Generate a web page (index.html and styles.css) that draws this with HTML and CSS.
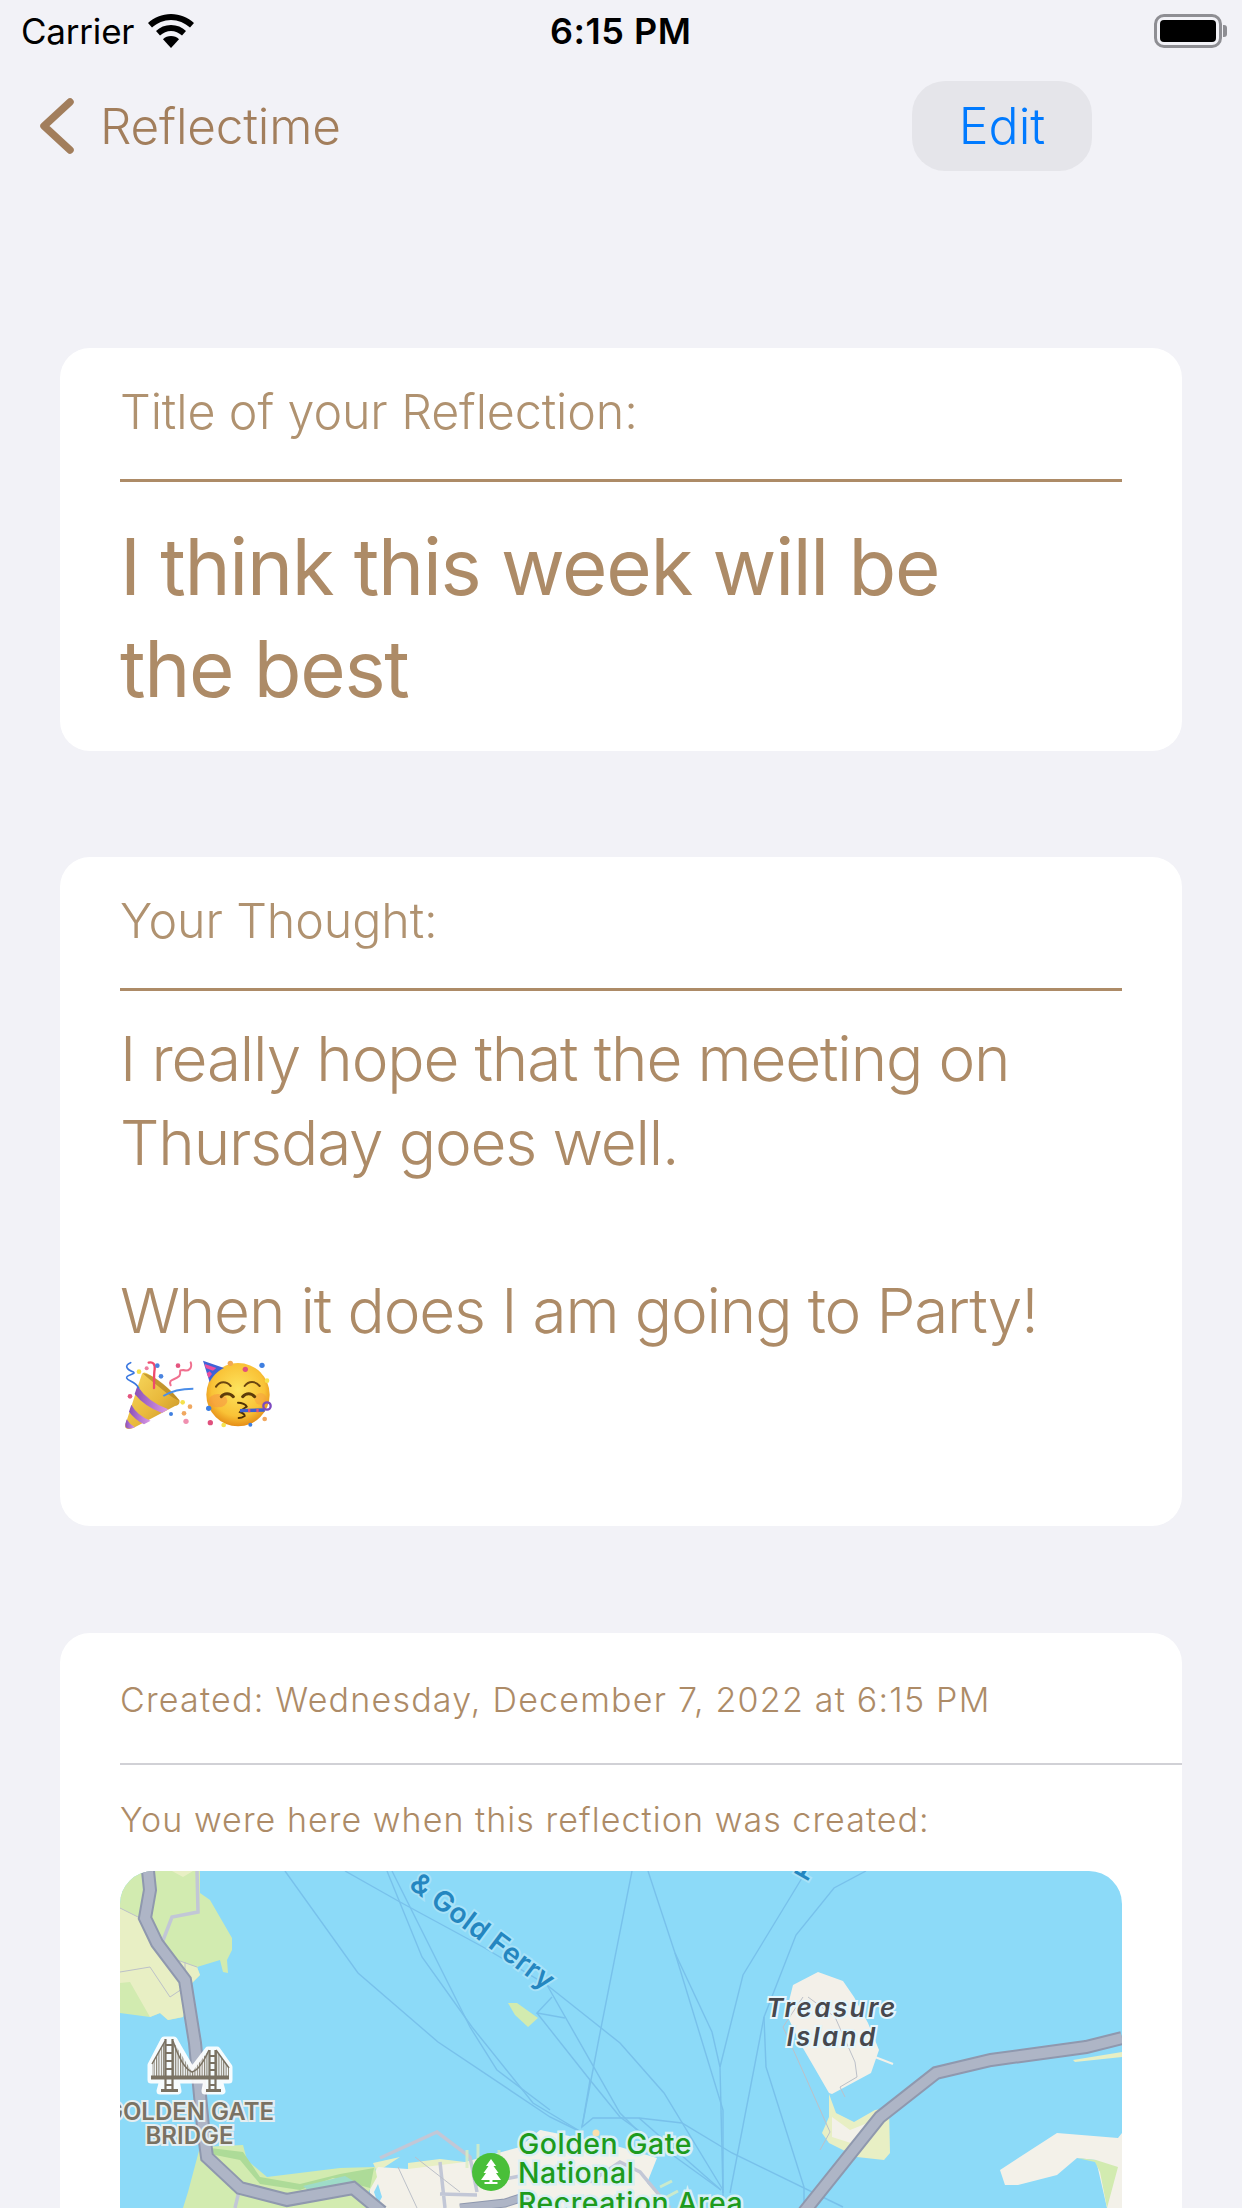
FILE: index.html
```html
<!DOCTYPE html>
<html lang="en">
<head>
<meta charset="utf-8">
<title>Reflectime</title>
<link rel="stylesheet" href="styles.css">
</head>
<body>
<div class="screen">
  <header class="status">
    <div class="status-left">
      <span class="carrier">Carrier</span>
      <svg class="wifi" viewBox="0 0 46 34"><path d="M23 0C14 0 6 3.500 0 9l4 4.500C9 9 16 6 23 6s14 3 19 7.500L46 9C40 3.500 32 0 23 0z"/><path d="M23 11c-6 0-11 2-15 6l4 4.500c3-2.700 7-4.500 11-4.500s8 1.800 11 4.500l4-4.500c-4-4-9-6-15-6z"/><path d="M23 22c-3 0-6 1-8 3.200L23 34l8-8.800C29 23 26 22 23 22z"/></svg>
    </div>
    <span class="time">6:15 PM</span>
    <div class="battery"><span class="battery-fill"></span></div>
  </header>
  <nav class="nav">
    <a class="back">
      <svg class="chevron" viewBox="0 0 36 56"><path d="M31 4L5 28l26 24" /></svg>
      <span>Reflectime</span>
    </a>
    <button class="edit">Edit</button>
  </nav>
  <main class="cards">
    <section class="card card-title">
      <div class="label">Title of your Reflection:</div>
      <h1 class="title">I think this week will be<br>the best</h1>
    </section>
    <section class="card card-thought">
      <div class="label">Your Thought:</div>
      <p class="thought">I really hope that the meeting on<br>Thursday goes well.<br><br>When it does I am going to Party!</p>
      <div class="emojis">
        <svg class="emoji" viewBox="72 88 210 210">
          <defs>
            <linearGradient id="cone" x1="0" y1="0" x2="1" y2="1"><stop offset="0" stop-color="#f9dc62"/><stop offset=".55" stop-color="#e9b93c"/><stop offset="1" stop-color="#c08c26"/></linearGradient>
            <linearGradient id="band" x1="0" y1="0" x2="1" y2="0"><stop offset="0" stop-color="#8a4fb8"/><stop offset="1" stop-color="#dc9be8"/></linearGradient>
          </defs>
          <path d="M75 285L125 132Q130 118 150 133Q205 168 238 208Q242 222 225 226L100 292Q76 300 75 285Z" fill="url(#cone)"/>
          <path d="M112 166Q145 215 205 236L186 247Q132 226 104 190Z" fill="url(#band)"/>
          <path d="M94 222Q112 255 152 270L132 281Q104 266 87 243Z" fill="url(#band)"/>
          <path d="M80 266Q88 280 105 290Q85 298 77 290Q74 280 80 266Z" fill="url(#band)"/>
          <path d="M128 128Q150 128 190 160Q225 190 238 210Q220 205 185 175Q140 140 128 128Z" fill="#a87a1e" opacity=".6"/>
          <path d="M92 96C70 105 82 118 100 124C110 132 78 130 80 142C84 152 105 150 116 172" fill="none" stroke="#3b78e0" stroke-width="5" stroke-linecap="round"/>
          <path d="M146 96C158 92 166 100 164 116C161 132 163 150 162 172" fill="none" stroke="#ef4a6d" stroke-width="7" stroke-linecap="round"/>
          <path d="M212 164C204 144 224 150 238 136C246 122 232 118 250 118C266 124 278 112 272 95" fill="none" stroke="#f0708f" stroke-width="6" stroke-linecap="round"/>
          <path d="M190 196C212 182 246 174 280 174" fill="none" stroke="#4a8de8" stroke-width="6"/>
          <g>
            <circle cx="117" cy="123" r="7" fill="#f5e14b"/>
            <circle cx="140" cy="113" r="6" fill="#ee7fa0"/>
            <circle cx="172" cy="105" r="7" fill="#4a84e0"/>
            <circle cx="183" cy="137" r="7" fill="#4a84e0"/>
            <circle cx="234" cy="105" r="7" fill="#e4557f"/>
            <circle cx="90" cy="197" r="7" fill="#e4557f"/>
            <circle cx="248" cy="215" r="7" fill="#f5e14b"/>
            <circle cx="270" cy="228" r="7" fill="#f0a860"/>
            <circle cx="252" cy="248" r="7" fill="#f0a860"/>
            <circle cx="213" cy="250" r="6" fill="#3f7fe0"/>
            <circle cx="258" cy="272" r="8" fill="#f090b0"/>
          </g>
        </svg>
        <svg class="emoji" viewBox="302 88 210 210">
          <defs><radialGradient id="face" cx=".5" cy=".42" r=".58"><stop offset="0" stop-color="#fde45e"/><stop offset=".72" stop-color="#f9c236"/><stop offset="1" stop-color="#e58d17"/></radialGradient></defs>
          <circle cx="410" cy="192" r="95" fill="url(#face)"/>
          <ellipse cx="350" cy="210" rx="28" ry="20" fill="#f59344" opacity=".55"/>
          <ellipse cx="478" cy="205" rx="18" ry="18" fill="#f59344" opacity=".4"/>
          <path d="M305 90L368 112C348 122 332 138 325 155Z" fill="#3f63d8"/>
          <path d="M310 100L345 112L335 120L313 112ZM316 128L325 122L332 130L322 142Z" fill="#ec4fa0"/>
          <path d="M344 168C356 150 376 152 388 166M430 166C442 150 462 150 475 166" fill="none" stroke="#6b4610" stroke-width="6" stroke-linecap="round"/>
          <path d="M360 198C368 186 386 186 396 198M424 198C434 186 450 186 460 198" fill="none" stroke="#5d3c0a" stroke-width="9" stroke-linecap="round"/>
          <path d="M410 216C422 216 434 222 436 228C430 232 420 238 416 244C426 248 430 252 430 256C424 260 418 262 412 262" fill="none" stroke="#513206" stroke-width="6" stroke-linecap="round"/>
          <path d="M416 240L490 238" stroke="#3f5fd0" stroke-width="10"/>
          <path d="M440 240l7 0M465 240l7 0" stroke="#e0507d" stroke-width="10"/>
          <circle cx="497" cy="226" r="11" fill="none" stroke="#7d4ac0" stroke-width="7"/>
          <circle cx="387" cy="98" r="8" fill="#f3a850"/>
          <circle cx="432" cy="116" r="8" fill="#e0507d"/>
          <circle cx="482" cy="104" r="8" fill="#3f7fe0"/>
          <circle cx="497" cy="150" r="7" fill="#f6e34f"/>
          <circle cx="322" cy="233" r="8" fill="#3f7fe0"/>
          <circle cx="327" cy="276" r="8" fill="#e0507d"/>
          <circle cx="367" cy="283" r="7" fill="#f6e34f"/>
          <circle cx="447" cy="282" r="6" fill="#3f7fe0"/>
          <circle cx="490" cy="265" r="7" fill="#f1a860"/>
        </svg>
      </div>
    </section>
    <section class="card card-meta">
      <div class="created">Created: Wednesday, December 7, 2022 at 6:15 PM</div>
      <div class="here">You were here when this reflection was created:</div>
      <div class="map">
        <svg class="map-svg" viewBox="0 -1 1002 337">
          <defs>
            <pattern id="hatch" width="2.400" height="10" patternUnits="userSpaceOnUse"><rect width="1.100" height="10" fill="#847d6e"/></pattern>
          </defs>
          <!-- land -->
          <path class="green" d="M0 -1H80V21L90 28L112 66V78L107 88L108 101L103 100L100 88L77 95L80 103L72 111L63 145L48 148L40 141L30 145L0 141Z"/>
          <path class="pale" d="M0 36L30 51L57 88L77 95L80 103L72 111L63 145L48 148L40 141L30 145L10 110L0 111Z"/>
          <path class="pale" d="M52 -1H73L63 5Z"/>
          <path class="green" d="M388 131L397 131L418 146L408 155L395 143Z"/>
          <!-- bottom land -->
          <path class="pale" d="M253 291L280 285L257 300ZM288 291L320 287L345 290L345 300L288 300Z"/>
          <path class="tan" d="M250 308L258 295L288 297L345 290L400 275L420 258L440 262L500 275L537 286L527 311L550 336H250Z"/>
          <path class="green" d="M63 336L68 320L80 275L123 273L127 288L147 305L220 296L255 295L257 305L248 321L260 336Z"/>
          <path class="greenDark" d="M90 276L123 280L140 305L180 312L220 302L254 296L250 316L213 306L180 318L140 312L120 288L90 282Z"/>
          <path class="teal" d="M183 314L225 304L235 310L190 320Z"/>
          <path class="pond" d="M254 320L258 312L262 325L258 332Z"/>
          <!-- treasure island -->
          <path class="tan" d="M698 100L723 109L734 125L748 151L759 178L751 201L712 222L709 221L694 195L680 171L666 141L673 113Z"/>
          <path class="pier" d="M755 185L773 192"/>
          <path class="pale" d="M709 222L716 241L734 250L755 238L769 236L770 281L764 288L737 285L709 271L702 261L709 245Z"/>
          <path class="tan" d="M712 245L712 265L734 272L758 245L745 252L730 258Z"/>
          <path class="tan" d="M880 298L937 261L998 266L1002 261V336H987L976 288L957 286L937 303L898 313L885 313Z"/>
          <path class="green" d="M957 286L976 288L998 295L987 336L980 300L975 290Z"/>
          <path class="pale" d="M953 188L1002 180V185L955 190Z"/>
          <!-- ferry lines -->
          <g class="ferry">
            <path d="M165 -1L238 101L318 170L430 245L463 261"/>
            <path d="M225 -1L280 30L363 75L427 113L500 171L544 221L603 318"/>
            <path d="M267 -1L302 85L352 155L413 231L463 261"/>
            <path d="M272 -1L350 155L377 198L430 238"/>
            <path d="M427 113L500 241L519 260"/>
            <path d="M432 125L417 141L445 146"/>
            <path d="M417 141L470 208L500 245L601 318"/>
            <path d="M512 -1L480 161L462 255L473 246L519 246L562 251L612 281L723 335"/>
            <path d="M519 246L601 318"/>
            <path d="M528 -1L555 81L603 238V336"/>
            <path d="M555 81L592 160L600 195L603 321"/>
            <path d="M682 6L623 103L600 195"/>
            <path d="M746 -1L714 16L676 63L644 145L610 321"/>
            <path d="M644 145L646 195L684 315V336"/>
            <path d="M470 208L462 255"/>
          </g>
          <!-- small roads -->
          <g class="minor">
            <path d="M77 -1L78 40L52 45L42 71"/>
            <path d="M115 336L120 315"/>
            <path d="M260 286L317 260L350 285L357 320M320 322L357 323M320 290L325 336"/>
            <path d="M357 312L390 306L420 300M470 310L500 290L520 300L550 336"/>
          </g>
          <g class="thin">
            <path d="M0 36L30 51L57 88L77 95M0 100L30 95L50 125L65 115V90"/>
            <path d="M688 125L715 145L735 190L737 205L720 215L725 225"/>
            <path d="M683 125L663 155L690 215L710 260L700 278"/>
            <path d="M278 295L297 336M295 285L340 320"/>
          </g>
          <g class="pier-set">
            <path d="M347 278V296M358 272V298M379 278V288"/>
            <path d="M540 315L552 309M545 326L558 319"/>
          </g>
          <circle class="poi" cx="476" cy="261" r="3.500"/>
          <path class="pier-white" d="M420 258L432 262L428 266Z"/>
          <!-- main roads -->
          <path class="road-edge" d="M28 -1L30 18L25 46L37 71L65 108L75 171L83 255L87 285L120 316L167 328L233 316L262 340"/>
          <path class="road" d="M28 -1L30 18L25 46L37 71L65 108L75 171L83 255L87 285L120 316L167 328L233 316L262 340"/>
          <path class="road-edge" d="M684 340L760 245L816 201L871 188L966 175L1002 166"/>
          <path class="road" d="M684 340L760 245L816 201L871 188L966 175L1002 166"/>
          <path class="road-edge thin-road" d="M340 336L385 331L410 323"/>
          <path class="road thin-road" d="M340 336L385 331L410 323"/>
          <!-- ferry label -->
          <text class="ferry-label" transform="translate(288 15) rotate(37)">&amp; Gold Ferry</text>
          <text class="ferry-label" text-anchor="middle" transform="translate(691 -13) rotate(210)">T</text>
          <!-- treasure island label -->
          <text class="ti-label" x="712" y="145" text-anchor="middle">Treasure</text>
          <text class="ti-label" x="712" y="174" text-anchor="middle">Island</text>
          <!-- bridge -->
          <g class="bridge">
            <path class="halo" d="M31 208V193L44 168H54L72 199L88 178H97L109 195V208H99L102 219H85L87 208H56L58 219H40L43 208Z"/>
            <path d="M32 204V192L45 169V204ZM53 169L72 200L89 178V204H53ZM96 178L109 196V204H96Z" fill="url(#hatch)"/>
            <path class="cables" d="M32 192L45 169M53 169Q62 196 72 200Q80 198 89 178M96 178L109 196"/>
            <path class="deck" d="M31 205.500H109"/>
            <path class="towers" d="M45.500 167V219M52.500 167V219M89.500 178V219M95.500 178V219M45 173H53M45 181H53M45 189H53M45 197H53M89 184H96M89 191H96M89 198H96M45 213H53M89 213H96"/>
            <path class="bases" d="M41 218.500H58M86 218.500H101"/>
          </g>
          <text class="gg-label" x="69.500" y="248" text-anchor="middle">GOLDEN GATE</text>
          <text class="gg-label" x="69.500" y="272" text-anchor="middle">BRIDGE</text>
          <!-- park pin -->
          <circle class="pin" cx="371" cy="300" r="19"/>
          <path class="tree" d="M371 287l5 7h-2.500l5 7h-2.500l5 7h-8.500v2h5v2h-13v-2h5v-2h-8.500l5-7h-2.500l5-7h-2.500z"/>
          <text class="park-label" x="398" y="282">Golden Gate</text>
          <text class="park-label" x="398" y="311">National</text>
          <text class="park-label" x="398" y="341">Recreation Area</text>
        </svg>
      </div>
    </section>
  </main>
</div>
</body>
</html>
```
FILE: styles.css
```css
* { box-sizing: border-box; }
html, body { margin: 0; padding: 0; }
body {
  background: #f2f2f7;
  font-family: Inter, "Noto Sans", "Liberation Sans", sans-serif;
  color: #ad8b67;
}
.screen { width: 1242px; height: 2208px; overflow: hidden; }

.status { display: flex; align-items: center; justify-content: space-between; height: 60px; padding: 2px 20px 0 21px; position: relative; }
.status-left { display: flex; align-items: center; gap: 14px; }
.carrier { font-size: 35px; color: #000; letter-spacing: -.2px; }
.wifi { width: 46px; height: 34px; fill: #000; }
.time { font-size: 36px; font-weight: 600; color: #000; position: absolute; left: 550px; letter-spacing: .5px; }
.battery { width: 68px; height: 34px; border: 3px solid #8e8e93; border-radius: 10px; padding: 3px; position: relative; }
.battery::after { content: ""; position: absolute; right: -8px; top: 8px; width: 4px; height: 12px; background: #8e8e93; border-radius: 0 3px 3px 0; }
.battery-fill { display: block; width: 100%; height: 100%; background: #000; border-radius: 4px; }

.nav { display: flex; align-items: center; justify-content: space-between; height: 90px; margin-top: 21px; padding-right: 150px; padding-left: 39px; }
.back { display: flex; align-items: center; gap: 25px; font-size: 49.500px; font-weight: 350; color: #a27e5c; letter-spacing: -.2px; }
.chevron { width: 36px; height: 56px; fill: none; stroke: #a27e5c; stroke-width: 7.500; stroke-linecap: round; stroke-linejoin: round; }
.edit { width: 180px; height: 90px; border: 0; border-radius: 33px; background: #e5e5ea; color: #007aff; font: 300 50px Inter, sans-serif; padding: 0; }

.cards { display: flex; flex-direction: column; gap: 106px; padding: 177px 60px 0; }
.card { background: #fff; border-radius: 30px; padding: 0 60px; }
.card-title { height: 403px; }
.card-thought { height: 669px; }
.card-meta { height: 900px; margin-top: 1px; }

.label { height: 134px; padding-top: 36px; font-size: 48.400px; line-height: 56px; font-weight: 300; letter-spacing: -.1px; border-bottom: 3px solid #ad8b67; color: #b09270; }
.title { margin: 34px 0 0; font-size: 78px; line-height: 102px; font-weight: 400; letter-spacing: -1.300px; }
.thought { margin: 26px 0 0; font-size: 62px; line-height: 84px; font-weight: 300; letter-spacing: -1.150px; }
.emojis { display: flex; gap: 8px; margin-top: 7px; margin-left: 4px; }
.emoji { width: 70px; height: 70px; }

.created { height: 132px; padding-top: 45px; font-size: 34px; line-height: 44px; font-weight: 300; letter-spacing: 1.220px; margin-right: -60px; border-bottom: 2px solid #d1d1d6; }
.here { margin-top: 33px; font-size: 34px; line-height: 44px; font-weight: 300; letter-spacing: 1.050px; }
.map { margin-top: 29px; height: 337px; border-radius: 33px 33px 0 0; overflow: hidden; background: #8cdaf8; }
.map-svg { display: block; width: 1002px; height: 337px; }

.green { fill: #d2ebb0; }
.greenDark { fill: #addb98; }
.teal { fill: #9edcc8; }
.pond { fill: #8cdaf8; }
.pale { fill: #e8efc4; }
.tan { fill: #f3f1e9; }
.pier { fill: none; stroke: #f3f1e9; stroke-width: 2; }
.pier-set { fill: none; stroke: #d9edc0; stroke-width: 3; opacity: .8; }
.pier-white { fill: #f3f1e9; }
.poi { fill: #f8dfae; }
.ferry { fill: none; stroke: #74bbe8; stroke-width: 1.400; opacity: .8; }
.minor { fill: none; stroke: #c2c7d6; stroke-width: 3.500; }
.thin { fill: none; stroke: #bcc0c8; stroke-width: 1; }
.road-edge { fill: none; stroke: #8f98ae; stroke-width: 14; stroke-linejoin: miter; }
.road { fill: none; stroke: #aeb5c6; stroke-width: 10; stroke-linejoin: miter; }
.thin-road { stroke-width: 7; }
.road-edge.thin-road { stroke-width: 9; }
.ferry-label { font: 600 28px Inter, sans-serif; fill: #2486c0; stroke: #a8e2f8; stroke-width: 4px; paint-order: stroke; letter-spacing: .5px; }
.ti-label { font: italic 600 26px Inter, sans-serif; fill: #46484e; stroke: #e6f6fc; stroke-width: 4px; paint-order: stroke; letter-spacing: 2.400px; }
.gg-label { font: 600 24px Inter, sans-serif; fill: #7a7263; stroke: #e6eef0; stroke-width: 4px; paint-order: stroke; }
.park-label { font: 500 28.500px Inter, sans-serif; fill: #1d9b1d; stroke: #d8f0f4; stroke-width: 5px; paint-order: stroke; letter-spacing: .5px; }
.pin { fill: #49bf39; }
.tree { fill: #fff; }
.halo { fill: #fff; stroke: #fff; stroke-width: 7; stroke-linejoin: round; opacity: .92; }
.cables { fill: none; stroke: #7a7263; stroke-width: 1.500; }
.deck { fill: none; stroke: #7a7263; stroke-width: 4; }
.towers { fill: none; stroke: #7a7263; stroke-width: 2.200; }
.bases { fill: none; stroke: #7a7263; stroke-width: 3; }
```
